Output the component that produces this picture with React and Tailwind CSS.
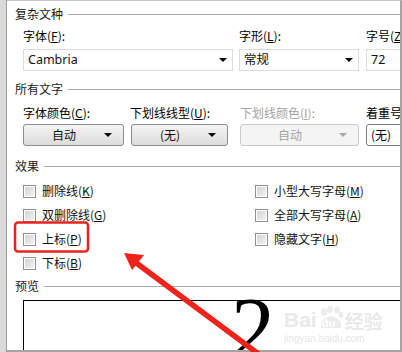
import React from "react";

const cjk = { fontFamily: '"Noto Sans CJK SC", "Noto Sans", sans-serif' };
const lat = { fontFamily: '"Noto Sans", "Noto Sans CJK SC", sans-serif' };

function Header({ children, mt }) {
  return (
    <div className={`flex items-center h-[14px] ${mt}`}>
      <span className="text-[12px] leading-[14px] text-[#1a1a1a] whitespace-nowrap">{children}</span>
      <div className="flex-1 h-px bg-[#a8a8a8] ml-[5px]" />
    </div>
  );
}

function Tri({ color = "#000" }) {
  return (
    <svg width="8" height="4" viewBox="0 0 8 4" className="shrink-0">
      <polygon points="0,0 8,0 4,4" fill={color} />
    </svg>
  );
}

function Select({ w, children, arrow = true }) {
  return (
    <div className={`h-[22px] ${w} bg-white border border-[#dcdcdc] flex items-center pl-[4px] pr-[5px]`}>
      <span className="flex-1 text-[12.5px] text-[#111] leading-none" style={lat}>{children}</span>
      {arrow && <Tri />}
    </div>
  );
}

function DropBtn({ w, children, disabled }) {
  return (
    <div
      className={`h-[22px] ${w} rounded-[3px] border flex items-center ${
        disabled
          ? "border-[#c9c9c9] bg-[#f4f4f4] text-[#a3a3a3]"
          : "border-[#8c8c8c] bg-gradient-to-b from-[#f4f4f4] to-[#dcdcdc] text-[#111]"
      }`}
    >
      <span className="flex-1 text-center text-[12px] leading-none">{children}</span>
      <div className="w-[15px] flex justify-start pl-[0px] mr-[4px]">
        <Tri color={disabled ? "#a8a8a8" : "#000"} />
      </div>
    </div>
  );
}

function Check({ children }) {
  return (
    <div className="h-[24px] flex items-center">
      <span className="w-[13px] h-[13px] border border-[#8f8f8f] bg-white p-px shrink-0">
        <span className="block w-full h-full bg-gradient-to-br from-[#d2d2d2] to-[#f4f4f4]" />
      </span>
      <span className="ml-[6px] text-[12px] leading-none text-[#111] whitespace-nowrap">{children}</span>
    </div>
  );
}

export default function App() {
  return (
    <div className="w-[402px] h-[352px] relative overflow-hidden bg-white flex" style={cjk}>
      <div className="w-[6px] h-full bg-[#dadada] border-r border-[#9c9c9c] shrink-0 box-content" />
      <div className="flex-1 h-full border-t border-t-[#c4c4c4] border-r-2 border-r-[#a4a4a4] border-b-2 border-b-[#a4a4a4] overflow-hidden pl-[8px] pt-[6px]">
        <Header mt="">复杂文种</Header>
        <div className="pl-[8px]">
          <div className="flex mt-[8px]">
            <div className="w-[210px] mr-[6px] shrink-0">
              <div className="h-[14px] text-[12px] leading-[14px]">字体(<u>F</u>):</div>
              <div className="mt-[6px]"><Select w="w-[210px]">Cambria</Select></div>
            </div>
            <div className="w-[120px] mr-[7px] shrink-0">
              <div className="h-[14px] text-[12px] leading-[14px]">字形(<u>L</u>):</div>
              <div className="mt-[6px]">
                <Select w="w-[120px]"><span style={cjk}>常规</span></Select>
              </div>
            </div>
            <div className="w-[80px] shrink-0">
              <div className="h-[14px] text-[12px] leading-[14px] whitespace-nowrap">字号(<u>Z</u>):</div>
              <div className="mt-[6px]"><Select w="w-[80px]" arrow={false}>72</Select></div>
            </div>
          </div>
        </div>

        <Header mt="mt-[11px]">所有文字</Header>
        <div className="pl-[8px]">
          <div className="flex mt-[10px]">
            <div className="w-[101px] mr-[7px] shrink-0">
              <div className="h-[14px] text-[12px] leading-[14px] whitespace-nowrap">字体颜色(<u>C</u>):</div>
              <div className="mt-[4px]"><DropBtn w="w-[101px]">自动</DropBtn></div>
            </div>
            <div className="w-[97px] mr-[12px] shrink-0">
              <div className="h-[14px] text-[12px] leading-[14px] whitespace-nowrap -ml-[1px]">下划线线型(<u>U</u>):</div>
              <div className="mt-[4px]"><DropBtn w="w-[97px]">(无)</DropBtn></div>
            </div>
            <div className="w-[119px] mr-[7px] shrink-0">
              <div className="h-[14px] text-[12px] leading-[14px] whitespace-nowrap text-[#a3a3a3]">下划线颜色(<u>I</u>):</div>
              <div className="mt-[4px]"><DropBtn w="w-[119px]" disabled>自动</DropBtn></div>
            </div>
            <div className="w-[80px] shrink-0">
              <div className="h-[14px] text-[12px] leading-[14px] whitespace-nowrap">着重号(·):</div>
              <div className="mt-[4px] h-[22px] w-[80px] rounded-[3px] border border-[#7a7a7a] bg-white flex items-center pl-[4px] text-[12px] leading-none">(无)</div>
            </div>
          </div>
        </div>

        <Header mt="mt-[13px]">效果</Header>
        <div className="pl-[8px] mt-[6px] flex">
          <div className="w-[232px] shrink-0">
            <Check>删除线(<u>K</u>)</Check>
            <Check>双删除线(<u>G</u>)</Check>
            <Check>上标(<u>P</u>)</Check>
            <Check>下标(<u>B</u>)</Check>
          </div>
          <div>
            <Check>小型大写字母(<u>M</u>)</Check>
            <Check>全部大写字母(<u>A</u>)</Check>
            <Check>隐藏文字(<u>H</u>)</Check>
          </div>
        </div>

        <Header mt="mt-[4px]">预览</Header>
        <div className="ml-[8px] mt-[7px] w-[420px] h-[120px] border border-black flex">
          <span
            className="ml-[207px] -mt-[16px] text-[88px] leading-none text-black"
            style={{ fontFamily: '"Liberation Serif", serif' }}
          >
            2
          </span>
        </div>
      </div>

      {/* watermark */}
      <div className="absolute left-[284px] top-[306px] pointer-events-none flex flex-col items-start">
        <div className="flex items-end text-[#e9e9e9]" style={{ fontFamily: '"Liberation Sans", sans-serif' }}>
          <span className="text-[21px] font-bold leading-none">Bai</span>
          <span className="relative w-[26px] h-[24px] mx-[1px]">
            <svg width="26" height="24" viewBox="0 0 26 24" className="absolute inset-0">
              <ellipse cx="6" cy="6" rx="3" ry="4" fill="#ececec" />
              <ellipse cx="12" cy="3.5" rx="3" ry="3.5" fill="#ececec" />
              <ellipse cx="19" cy="4" rx="3" ry="3.5" fill="#ececec" />
              <ellipse cx="23" cy="9" rx="2.5" ry="3" fill="#ececec" />
              <path d="M3 22 Q2 12 13 10 Q24 12 23 22 Z" fill="#ececec" />
            </svg>
            <span className="absolute left-[4px] bottom-[1px] text-[11px] font-bold leading-none text-white">du</span>
          </span>
          <span className="text-[19px] font-bold leading-none" style={cjk}>经验</span>
        </div>
        <span className="text-[10px] leading-none mt-[4px] text-[#e6e6e6]" style={{ fontFamily: '"Liberation Sans", sans-serif' }}>
          jingyan.baidu.com
        </span>
      </div>

      {/* annotations */}
      <svg width="402" height="352" className="absolute left-0 top-0 pointer-events-none">
        <rect x="15" y="222.5" width="73" height="29" rx="3" fill="none" stroke="#e8231c" strokeWidth="2.5" />
        <line x1="135" y1="262" x2="276" y2="367" stroke="#f0231a" strokeWidth="5.5" />
        <polygon points="124,253 144,255 132,270" fill="#f0231a" />
      </svg>
    </div>
  );
}
